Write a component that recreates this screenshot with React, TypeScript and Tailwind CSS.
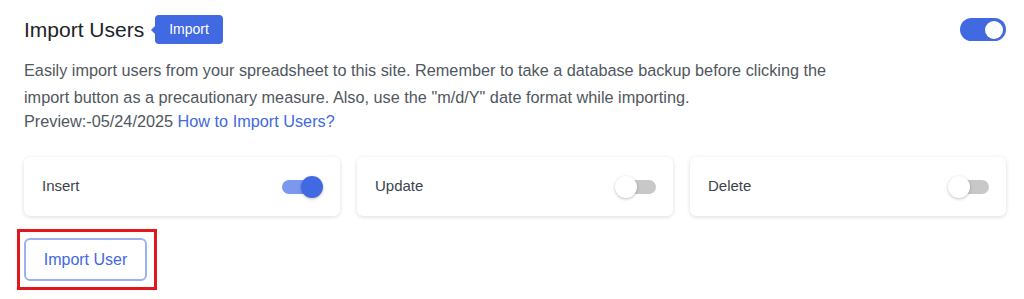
import React from 'react';

function Toggle({ on, variant }: { on: boolean; variant: 'main' | 'small' }) {
  if (variant === 'main') {
    return (
      <div className="w-[46px] h-[23px] rounded-full bg-[#4169e1] flex items-center justify-end px-[3px]">
        <div className="w-[18px] h-[18px] rounded-full bg-white" />
      </div>
    );
  }
  return (
    <div className="relative w-[41px] h-[24px]">
      <div
        className={
          on
            ? 'absolute left-0 top-[5px] w-[33px] h-[14px] rounded-full bg-[#7b97ee]'
            : 'absolute right-0 top-[5px] w-[32px] h-[14px] rounded-full bg-[#c8c8c8]'
        }
      />
      <div
        className={
          on
            ? 'absolute right-0 top-px w-[22px] h-[22px] rounded-full bg-[#4169e1] shadow-[0_1px_3px_rgba(0,0,0,0.25)]'
            : 'absolute left-0 top-px w-[22px] h-[22px] rounded-full bg-white shadow-[0_1px_3px_rgba(0,0,0,0.25)]'
        }
      />
    </div>
  );
}

function OptionCard({ label, on }: { label: string; on: boolean }) {
  return (
    <div className="flex items-center justify-between h-[59px] pl-[18px] pr-[17px] bg-white rounded-md shadow-[0_1px_4px_rgba(0,0,0,0.14)]">
      <span className="text-[15px] text-[#3c434a]">{label}</span>
      <Toggle on={on} variant="small" />
    </div>
  );
}

export default function App() {
  return (
    <div className="w-[1024px] h-[299px] bg-white pl-6 pr-[18px] pt-[15px] font-['Liberation_Sans',Arial,sans-serif]">
      <div className="flex items-center justify-between">
        <div className="flex items-center">
          <h2 className="text-[21px] text-[#1d2327] leading-[29px]">Import Users</h2>
          <div className="relative ml-[11px] h-[29px] px-[14px] flex items-center rounded bg-[#4169e1] text-white text-[14px]">
            <span className="absolute left-[-4px] top-[10px] w-0 h-0 border-y-[5px] border-y-transparent border-r-[5px] border-r-[#4169e1]" />
            Import
          </div>
        </div>
        <Toggle on variant="main" />
      </div>

      <div className="mt-[13px] text-[16.25px] text-[#50575e] max-w-[840px]">
        <p className="leading-[27px]">
          Easily import users from your spreadsheet to this site. Remember to take a database backup before clicking the
          import button as a precautionary measure. Also, use the "m/d/Y" date format while importing.
        </p>
        <p className="leading-[21px]">
          Preview:-05/24/2025 <a className="text-[#4169e1]">How to Import Users?</a>
        </p>
      </div>

      <div className="mt-[25px] grid grid-cols-3 gap-[17px]">
        <OptionCard label="Insert" on />
        <OptionCard label="Update" on={false} />
        <OptionCard label="Delete" on={false} />
      </div>

      <div className="mt-[13px] ml-[-7px] w-[140px] pl-[4px] py-[6px] border-[3px] border-[#e3161e]">
        <button className="w-[123px] h-[43px] rounded-md border-2 border-[#9bb2f2] text-[#4169e1] text-[16px] bg-white">
          Import User
        </button>
      </div>
    </div>
  );
}
